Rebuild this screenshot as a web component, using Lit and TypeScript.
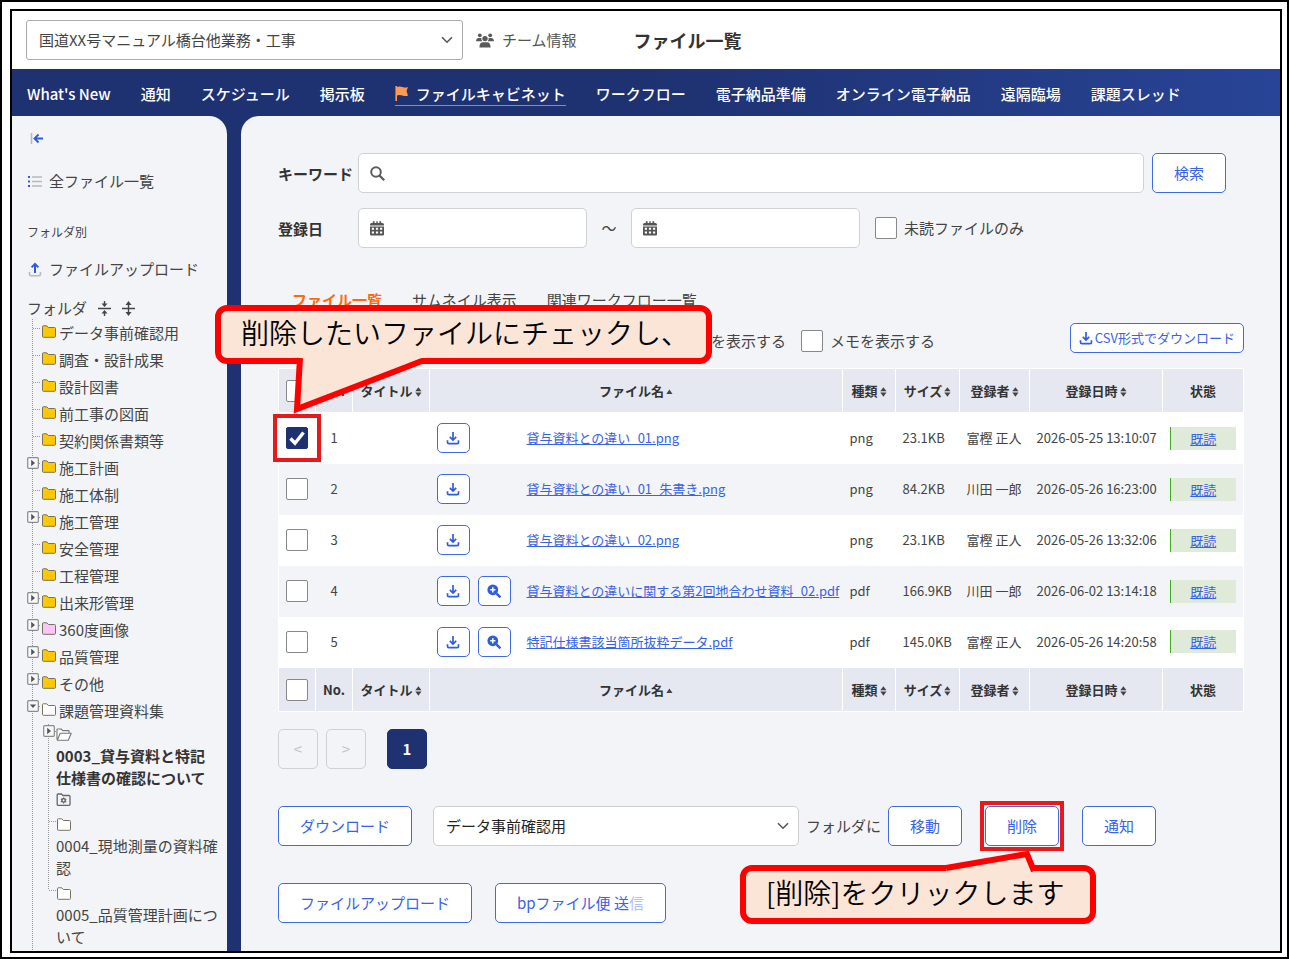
import { LitElement, html, svg, css, nothing } from "lit";
import { customElement, state } from "lit/decorators.js";
import { classMap } from "lit/directives/class-map.js";

interface FileRow {
  no: number;
  name: string;
  type: string;
  size: string;
  owner: string;
  date: string;
}

interface Folder {
  name: string;
  kind: "yellow" | "pink" | "white";
  expander?: "closed" | "open";
}

const NAV = [
  "What's New",
  "通知",
  "スケジュール",
  "掲示板",
  "ファイルキャビネット",
  "ワークフロー",
  "電子納品準備",
  "オンライン電子納品",
  "遠隔臨場",
  "課題スレッド",
];

const FOLDERS: Folder[] = [
  { name: "データ事前確認用", kind: "yellow" },
  { name: "調査・設計成果", kind: "yellow" },
  { name: "設計図書", kind: "yellow" },
  { name: "前工事の図面", kind: "yellow" },
  { name: "契約関係書類等", kind: "yellow" },
  { name: "施工計画", kind: "yellow", expander: "closed" },
  { name: "施工体制", kind: "yellow" },
  { name: "施工管理", kind: "yellow", expander: "closed" },
  { name: "安全管理", kind: "yellow" },
  { name: "工程管理", kind: "yellow" },
  { name: "出来形管理", kind: "yellow", expander: "closed" },
  { name: "360度画像", kind: "pink", expander: "closed" },
  { name: "品質管理", kind: "yellow", expander: "closed" },
  { name: "その他", kind: "yellow", expander: "closed" },
  { name: "課題管理資料集", kind: "white", expander: "open" },
];

const FILES: FileRow[] = [
  { no: 1, name: "貸与資料との違い_01.png", type: "png", size: "23.1KB", owner: "富樫 正人", date: "2026-05-25 13:10:07" },
  { no: 2, name: "貸与資料との違い_01_朱書き.png", type: "png", size: "84.2KB", owner: "川田 一郎", date: "2026-05-26 16:23:00" },
  { no: 3, name: "貸与資料との違い_02.png", type: "png", size: "23.1KB", owner: "富樫 正人", date: "2026-05-26 13:32:06" },
  { no: 4, name: "貸与資料との違いに関する第2回地合わせ資料_02.pdf", type: "pdf", size: "166.9KB", owner: "川田 一郎", date: "2026-06-02 13:14:18" },
  { no: 5, name: "特記仕様書該当箇所抜粋データ.pdf", type: "pdf", size: "145.0KB", owner: "富樫 正人", date: "2026-05-26 14:20:58" },
];

const FILL = { yellow: "#ffc800", pink: "#fcc4f8", white: "#fff" };

const icon = (w: number, h: number, body: unknown) =>
  html`<svg width=${w} height=${h} viewBox="0 0 ${w} ${h}" aria-hidden="true">${body}</svg>`;

const chevron = icon(12, 8, svg`<path d="M1 1.2l5 5 5-5" fill="none" stroke="#555" stroke-width="1.6"/>`);

const folder = (fill: string) =>
  icon(16, 13, svg`<path d="M1.5 1.5Q1.5.8 2.2.8h3.6l1.6 1.7h6.1q1 0 1 1v8q0 .8-1 .8h-11q-1 0-1-.8z" fill=${fill} stroke="#77725f" stroke-width="1"/>`);

const openFolder = icon(16, 13, svg`<path d="M1 11.5V1.6Q1 1 1.7 1h3.5l1.5 1.6h5.6q.8 0 .8.8V5M1.3 12.2L4.2 5.2h11l-2.9 7z" fill="#fff" stroke="#777" stroke-width="1.1" stroke-linejoin="round"/>`);

const gearFolder = icon(16, 13, svg`
  <path d="M1.2 11.5V1.8Q1.2 1 2 1h3.4l1.6 1.5h6q1 0 1 1v8q0 .8-1 .8H2q-.8 0-.8-.8z" fill="#f3f4f8" stroke="#666" stroke-width="1.3"/>
  <circle cx="7.6" cy="7.4" r="1.7" fill="none" stroke="#555" stroke-width="1.3"/>
  <path d="M7.6 4.4v1M7.6 9.4v1M4.9 5.9l.9.5M9.4 8.4l.9.5M4.9 8.9l.9-.5M9.4 6.4l.9-.5" stroke="#555" stroke-width="1.1"/>`);

const expander = (open: boolean) =>
  icon(12, 12, svg`<rect x=".7" y=".7" width="10.6" height="10.6" rx="1" fill="#f7f8fb" stroke="#8a8a8a" stroke-width="1.2"/>
    ${open ? svg`<path d="M2.8 4.4h6.4L6 8z" fill="#555"/>` : svg`<path d="M4.2 2.8v6.4L8 6z" fill="#555"/>`}`);

const download = icon(14, 14, svg`
  <path d="M7 1v7.6M3.8 5.8L7 9l3.2-3.2" fill="none" stroke="#2f5be0" stroke-width="1.7"/>
  <path d="M1.5 9.3v1.9q0 1.5 1.5 1.5h8q1.5 0 1.5-1.5V9.3" fill="none" stroke="#2f5be0" stroke-width="1.7"/>`);

const upload = icon(14, 15, svg`
  <path d="M7 11V2.2M3.6 5.4L7 2l3.4 3.4" fill="none" stroke="#2f5be0" stroke-width="2"/>
  <path d="M1.5 10v2.2q0 1.5 1.5 1.5h8q1.5 0 1.5-1.5V10" fill="none" stroke="#bbb" stroke-width="1.6"/>`);

const zoomIn = icon(14, 14, svg`
  <circle cx="5.8" cy="5.8" r="5.4" fill="#2f5be0"/>
  <path d="M9.4 9.4l4 4" stroke="#2f5be0" stroke-width="2.3"/>
  <path d="M5.8 3.2v5.2M3.2 5.8h5.2" stroke="#fff" stroke-width="1.5"/>`);

const search = icon(15, 15, svg`<circle cx="6" cy="6" r="4.8" fill="none" stroke="#5c5c5c" stroke-width="2"/><path d="M9.6 9.6l4.6 4.6" stroke="#5c5c5c" stroke-width="2.2"/>`);

const calendar = icon(14, 15, svg`
  <path d="M0 3.6Q0 2 1.6 2H2.8V.2h1.8V2h1.7V.2h1.4V2h1.7V.2h1.8V2h1.2Q14 2 14 3.6V4.6H0z" fill="#555"/>
  <path d="M0 5.4h14v7.8q0 1.4-1.4 1.4H1.4Q0 14.6 0 13.2z" fill="#555"/>
  <path d="M1.8 6.8h2.2v2H1.8zM5.9 6.8h2.2v2H5.9zM10 6.8h2.2v2H10zM1.8 10.6h2.2v2H1.8zM5.9 10.6h2.2v2H5.9zM10 10.6h2.2v2H10z" fill="#fff"/>`);

const people = icon(18, 15, svg`<g fill="#5a5a5a">
  <circle cx="3.8" cy="2.3" r="1.9"/><circle cx="14.2" cy="2.3" r="1.9"/><circle cx="9" cy="5.6" r="2.7"/>
  <path d="M0 8.2Q.2 4.9 3 4.9h1.5q.6 0 .9.2Q5 7.2 6.3 8.3H.4zM18 8.2Q17.8 4.9 15 4.9h-1.5q-.6 0-.9.2Q13 7.2 11.7 8.3h5.9zM3.4 14.6Q3.5 9.3 7 9.3h4q3.5 0 3.6 5.3z"/></g>`);

const flag = icon(14, 15, svg`<path d="M1.2 0v15" stroke="#ff9a52" stroke-width="1.6"/><path d="M1.5 1q3-1.200 6 0t5.500 0l-1.500 4 1.500 4.500q-2.500 1.200-5.500 0t-6 0z" fill="#ff9a52"/>`);

const listIcon = icon(16, 13, svg`
  <path d="M1 1h2v2H1zM1 5.500h2v2H1zM1 10h2v2H1z" fill="#2f5be0"/>
  <path d="M5 2h10M5 6.500h10M5 11h10" stroke="#b5b8c0" stroke-width="1.600"/>`);

const collapse = icon(14, 11, svg`<path d="M1.500 0v11" stroke="#b5b8c0" stroke-width="1.600"/><path d="M13 5.500H5M8.500 1.500l-4 4 4 4" fill="none" stroke="#2f5be0" stroke-width="1.900"/>`);

const foldAll = icon(13, 15, svg`<path d="M0 7.500h13M6.500 0v4M6.500 15v-4" stroke="#444" stroke-width="1.400"/><path d="M3.500 2.500h6l-3 3.500zM3.500 12.500h6l-3-3.500z" fill="#444"/>`);

const unfoldAll = icon(13, 15, svg`<path d="M0 7.500h13M6.500 3v10" stroke="#444" stroke-width="1.400"/><path d="M3.500 4h6l-3-4zM3.500 11h6l-3 4z" fill="#444"/>`);

const sortBoth = icon(7, 10, svg`<path d="M.3 4.200h6.200L3.400.2zM.3 5.600h6.200L3.400 9.800z" fill="#444"/>`);
const sortUp = icon(7, 6, svg`<path d="M.3 5h6.200L3.400 .6z" fill="#444"/>`);

@customElement("app-root")
export class AppRoot extends LitElement {
  @state() private selected = new Set<number>([1]);

  static styles = css`
    :host {
      display: block;
      font-family: "Noto Sans CJK JP", "Noto Sans", sans-serif;
      font-size: 15px;
      line-height: 22px;
      color: #444;
    }
    * { box-sizing: border-box; }
    svg { display: block; flex: none; }
    ul { list-style: none; margin: 0; padding: 0; }
    h1, p { margin: 0; }
    button, input, select { font: inherit; color: inherit; margin: 0; }
    a { color: inherit; text-decoration: none; }

    .sheet {
      display: flex;
      min-height: 100vh;
      border: 2px solid #000;
      padding: 7px 5px 4px 8px;
      background: #fff;
    }
    .window {
      flex: 1;
      min-width: 0;
      display: flex;
      flex-direction: column;
      border: 2px solid #000;
    }
    .top {
      display: flex;
      align-items: center;
      height: 58px;
      padding: 0 14px;
    }
    .pick { display: grid; align-items: center; }
    .pick select {
      grid-area: 1 / 1;
      appearance: none;
      height: 40px;
      width: 100%;
      border: 1px solid #cfcfcf;
      border-radius: 5px;
      background: #fff;
      padding: 0 32px 0 12px;
      color: #222;
    }
    .pick svg { grid-area: 1 / 1; justify-self: end; margin-right: 10px; pointer-events: none; }
    .project { width: 437px; }
    .project select { border-color: #aaa; border-radius: 3px; color: #444; }
    .team { display: flex; align-items: center; gap: 8px; margin-left: 13px; color: #555; }
    h1 { margin-left: 57px; font-size: 18px; font-weight: 700; color: #333; }

    .nav {
      height: 47px;
      padding: 0 15px;
      background: linear-gradient(90deg, #1e3170 50%, #284496);
    }
    .nav ul { display: flex; align-items: center; gap: 30px; height: 100%; padding-top: 3px; }
    .nav a { display: flex; align-items: center; gap: 7px; color: #fff; font-weight: 500; white-space: nowrap; border-bottom: 1px solid transparent; }
    .nav a.current { border-color: #6f8ee8; }

    .body { flex: 1; display: flex; gap: 14px; background: #1e3272; }
    .side {
      width: 215px;
      flex: none;
      display: flex;
      flex-direction: column;
      padding: 12px 4px 0 15px;
      background: #f3f4f8;
      border-radius: 0 18px 0 0;
    }
    .tool { display: flex; align-items: center; justify-content: center; width: 20px; height: 20px; border: 0; padding: 0; background: none; }
    .link { display: flex; align-items: center; gap: 7px; height: 24px; }
    .all { margin-top: 21px; gap: 6px; }
    .caption { margin-top: 29px; height: 20px; font-size: 12px; line-height: 20px; }
    .upload { margin-top: 15px; padding-left: 1px; }
    .head { display: flex; align-items: center; margin-top: 16px; height: 22px; }
    .head .tool { width: 13px; margin-left: 11px; }

    .tree { flex: 1; background: repeating-linear-gradient(#999 0 1px, transparent 1px 2px) 5px 0 / 1px 100% no-repeat; }
    .node {
      display: grid;
      grid-template-columns: 13px 16px 1fr;
      column-gap: 1px;
      align-items: center;
      height: 27px;
      background: repeating-linear-gradient(90deg, #999 0 1px, transparent 1px 2px) 6px 9px / 8px 1px no-repeat;
    }
    .node > svg { margin-bottom: 2px; }
    .node .toggle { padding-bottom: 10px; }
    .node .name { padding-left: 1px; }
    .toggle { display: block; border: 0; padding: 0; background: none; }
    .sub { margin-left: 16px; background: repeating-linear-gradient(#999 0 1px, transparent 1px 2px) 5px 0 / 1px 166px no-repeat; }
    .sub li {
      padding-left: 13px;
      margin-bottom: 4px;
      background: repeating-linear-gradient(90deg, #999 0 1px, transparent 1px 2px) 6px 7px / 8px 1px no-repeat;
    }
    .sub li:last-child { margin-bottom: 0; }
    .sub li.on { padding-right: 12px; font-weight: 700; color: #333; }
    .line { display: flex; align-items: center; height: 21px; }
    .on .line .toggle { margin: 0 1px 8px -13px; }

    .main {
      flex: 1;
      min-width: 0;
      padding: 37px 36px 28px 37px;
      background: #f3f4f8;
      border-radius: 18px 0 0 0;
    }
    .row { display: flex; align-items: center; }
    .form { display: grid; gap: 15px; padding-right: 18px; }
    .form .lab { width: 80px; font-weight: 700; color: #333; padding-top: 2px; }
    .field {
      display: flex;
      align-items: center;
      gap: 8px;
      height: 40px;
      padding: 0 11px;
      border: 1px solid #d0d1d4;
      border-radius: 5px;
      background: #fff;
    }
    .field input { flex: 1; min-width: 0; border: 0; padding: 0; background: none; outline: 0; }
    .grow { flex: 1; }
    .date { width: 229px; }
    .wave { width: 44px; text-align: center; }
    .btn {
      display: flex;
      align-items: center;
      justify-content: center;
      height: 40px;
      padding: 0 21px;
      border: 1px solid #3f6ae6;
      border-radius: 5px;
      background: #fff;
      color: #3763e4;
      white-space: nowrap;
    }
    .form .btn { margin-left: 8px; }
    .check {
      appearance: none;
      display: block;
      flex: none;
      width: 22px;
      height: 22px;
      border: 1px solid #888;
      border-radius: 2px;
      background: #fff;
    }
    .check:checked {
      border-color: #1e3272;
      background: #1e3272 url("data:image/svg+xml,%3Csvg xmlns='http://www.w3.org/2000/svg' viewBox='0 0 20 20'%3E%3Cpath d='M3.500 10.500l4.500 4.700L16.500 4.500' fill='none' stroke='white' stroke-width='3.400'/%3E%3C/svg%3E") center / 20px 20px no-repeat;
    }
    .opt { display: flex; align-items: center; gap: 7px; }
    .date + .opt { margin-left: 15px; }

    .tabs { display: flex; gap: 30px; margin-top: 40px; padding-left: 14px; height: 24px; }
    .tabs a { line-height: 24px; }
    .tabs .current { color: #ff6a0d; font-weight: 700; }
    .options { display: flex; align-items: center; gap: 15px; height: 30px; margin-top: 11px; padding-left: 374px; white-space: nowrap; }
    .options .opt { padding-top: 5px; }
    .csv { height: 30px; margin-left: auto; padding: 0 8px; gap: 2px; font-size: 13px; }

    table { width: 100%; margin-top: 15px; border-collapse: collapse; table-layout: fixed; font-size: 13px; line-height: 20px; border: 1px solid #fff; }
    .c1, .c2 { width: 37px; }
    .c3 { width: 77px; }
    .c5 { width: 53px; }
    .c6 { width: 64px; }
    .c7 { width: 70px; }
    .c8 { width: 133px; }
    .c9 { width: 81px; }
    th { height: 44px; padding: 0; background: #e5e8f1; border: 1px solid #fff; color: #333; font-weight: 700; white-space: nowrap; }
    th .row { justify-content: center; gap: 2px; }
    th svg { margin-top: 3px; }
    td { height: 51px; padding: 0 7px; white-space: nowrap; }
    td.no { text-align: center; padding: 0; }
    td.names { padding-right: 0; }
    tbody tr { background: #fff; }
    tbody tr:nth-child(even) { background: #f3f4f8; }
    .file { display: grid; grid-template-columns: 33px 33px 1fr; column-gap: 8px; align-items: center; }
    .mini { height: 30px; padding: 0; }
    .file a { grid-column: 3; padding-left: 8px; color: #3763e4; text-decoration: underline; }
    .badge { display: block; height: 23px; line-height: 23px; border-left: 1px solid #3fae1f; background: #dfead8; text-align: center; color: #3763e4; text-decoration: underline; }

    .pages { display: flex; margin-top: 17px; }
    .page { width: 40px; height: 40px; margin-right: 8px; padding: 0; border: 1px solid #cfd0d3; border-radius: 5px; background: none; color: #c4c5c8; }
    .page.current { margin-left: 13px; border-color: #1e3272; background: #1e3272; color: #fff; font-weight: 700; }
    .actions { margin-top: 37px; }
    .target { width: 366px; margin-left: 21px; }
    .unit { margin: 0 7px; white-space: nowrap; }
    .gap { margin-left: 23px; }

    .spot { position: relative; }
    .mark { outline: 4px solid #e8191c; outline-offset: 1px; }
    .mark.wide { outline-offset: 9px; width: 22px; }
    .note {
      position: absolute;
      z-index: 2;
      border: 6px solid #f00;
      border-radius: 12px;
      background: #fbe5d6;
      color: #000;
      font-size: 28px;
      font-weight: 350;
      line-height: 42px;
      padding: 0 20px 5px;
      white-space: nowrap;
    }
    .note svg { position: absolute; overflow: visible; }
    .note.first { left: -71px; top: -122px; width: 497px; }
    .note.first svg { left: 74px; top: 47px; }
    .note.second { left: -245px; top: 59px; width: 356px; }
    .note.second svg { left: 200px; top: -21px; }
    .faint { opacity: 0.4; }
  `;

  private toggle(no: number) {
    const next = new Set(this.selected);
    next.has(no) ? next.delete(no) : next.add(no);
    this.selected = next;
  }

  private heading(place: string) {
    return html`<tr>
      <th><div class="row"><input class="check" type="checkbox" aria-label="${place}" /></div></th>
      <th>No.</th>
      <th><div class="row">タイトル${sortBoth}</div></th>
      <th><div class="row">ファイル名${sortUp}</div></th>
      <th><div class="row">種類${sortBoth}</div></th>
      <th><div class="row">サイズ${sortBoth}</div></th>
      <th><div class="row">登録者${sortBoth}</div></th>
      <th><div class="row">登録日時${sortBoth}</div></th>
      <th>状態</th>
    </tr>`;
  }

  private fileRow(f: FileRow) {
    const first = f.no === 1;
    return html`<tr>
      <td>
        <div class=${classMap({ spot: first, mark: first, wide: first })}>
          <input class="check" type="checkbox" aria-label=${f.name} .checked=${this.selected.has(f.no)} @change=${() => this.toggle(f.no)} />
          ${first
            ? html`<div class="note first">
                削除したいファイルにチェックし、
                <svg width="130" height="58" viewBox="0 0 130 58" aria-hidden="true">
                  <path d="M5 0L2 51 127 0z" fill="#fbe5d6" />
                  <path d="M5 0L2 51 127 3" fill="none" stroke="#f00" stroke-width="6" />
                </svg>
              </div>`
            : nothing}
        </div>
      </td>
      <td class="no">${f.no}</td>
      <td></td>
      <td class="names">
        <div class="file">
          <button class="btn mini" aria-label="ダウンロード">${download}</button>
          ${f.type === "pdf" ? html`<button class="btn mini" aria-label="プレビュー">${zoomIn}</button>` : nothing}
          <a href="#">${f.name}</a>
        </div>
      </td>
      <td>${f.type}</td>
      <td>${f.size}</td>
      <td>${f.owner}</td>
      <td>${f.date}</td>
      <td><a class="badge" href="#">既読</a></td>
    </tr>`;
  }

  render() {
    return html`<div class="sheet"><div class="window">
      <header class="top">
        <div class="pick project">
          <select aria-label="プロジェクト"><option>国道XX号マニュアル橋台他業務・工事</option></select>
          ${chevron}
        </div>
        <a class="team" href="#">${people}チーム情報</a>
        <h1>ファイル一覧</h1>
      </header>
      <nav class="nav"><ul>
        ${NAV.map((n, i) => html`<li><a href="#" class=${classMap({ current: i === 4 })}>${i === 4 ? flag : nothing}${n}</a></li>`)}
      </ul></nav>
      <div class="body">
        <aside class="side">
          <button class="tool" aria-label="閉じる">${collapse}</button>
          <a class="link all" href="#">${listIcon}全ファイル一覧</a>
          <p class="caption">フォルダ別</p>
          <a class="link upload" href="#">${upload}ファイルアップロード</a>
          <div class="head">フォルダ
            <button class="tool" aria-label="すべて閉じる">${foldAll}</button>
            <button class="tool" aria-label="すべて開く">${unfoldAll}</button>
          </div>
          <div class="tree">
            <ul>
              ${FOLDERS.map((f) => html`<li class="node">
                ${f.expander ? html`<button class="toggle" aria-label="開閉">${expander(f.expander === "open")}</button>` : html`<span></span>`}
                ${folder(FILL[f.kind])}
                <a class="name" href="#">${f.name}</a>
              </li>`)}
            </ul>
            <ul class="sub">
              <li class="on">
                <div class="line"><button class="toggle" aria-label="開閉">${expander(false)}</button>${openFolder}</div>
                <a href="#">0003_貸与資料と特記仕様書の確認について</a>
                <div class="line">${gearFolder}</div>
              </li>
              <li><div class="line">${folder(FILL.white)}</div><a href="#">0004_現地測量の資料確認</a></li>
              <li><div class="line">${folder(FILL.white)}</div><a href="#">0005_品質管理計画について</a></li>
            </ul>
          </div>
        </aside>
        <main class="main">
          <form class="form">
            <div class="row">
              <label class="lab" for="kw">キーワード</label>
              <div class="field grow">${search}<input id="kw" type="text" /></div>
              <button class="btn" type="button">検索</button>
            </div>
            <div class="row">
              <label class="lab" for="from">登録日</label>
              <div class="field date">${calendar}<input id="from" type="text" /></div>
              <span class="wave">～</span>
              <div class="field date">${calendar}<input aria-label="登録日" type="text" /></div>
              <label class="opt"><input class="check" type="checkbox" />未読ファイルのみ</label>
            </div>
          </form>
          <nav class="tabs">
            <a class="current" href="#">ファイル一覧</a>
            <a href="#">サムネイル表示</a>
            <a href="#">関連ワークフロー一覧</a>
          </nav>
          <div class="options">
            <label class="opt"><input class="check" type="checkbox" />タグを表示する</label>
            <label class="opt"><input class="check" type="checkbox" />メモを表示する</label>
            <button class="btn csv">${download}CSV形式でダウンロード</button>
          </div>
          <table>
            <colgroup>${[1, 2, 3, 4, 5, 6, 7, 8, 9].map((n) => html`<col class="c${n}" />`)}</colgroup>
            <thead>${this.heading("すべて選択")}</thead>
            <tbody>${FILES.map((f) => this.fileRow(f))}</tbody>
            <tfoot>${this.heading("すべて選択")}</tfoot>
          </table>
          <div class="pages">
            <button class="page" disabled>&lt;</button>
            <button class="page" disabled>&gt;</button>
            <button class="page current">1</button>
          </div>
          <div class="row actions">
            <button class="btn">ダウンロード</button>
            <div class="pick target">
              <select id="dest"><option>データ事前確認用</option></select>
              ${chevron}
            </div>
            <label class="unit" for="dest">フォルダに</label>
            <button class="btn">移動</button>
            <div class="spot mark gap">
              <button class="btn">削除</button>
              <div class="note second">
                [削除]をクリックします
                <svg width="95" height="24" viewBox="0 0 95 24" aria-hidden="true">
                  <path d="M0 18L81 4 88 23 85 21H0z" fill="#fbe5d6" />
                  <path d="M0 18L81 4 88 21" fill="none" stroke="#f00" stroke-width="6" />
                </svg>
              </div>
            </div>
            <button class="btn gap">通知</button>
          </div>
          <div class="row actions">
            <button class="btn">ファイルアップロード</button>
            <button class="btn gap"><span>bpファイル便 送<span class="faint">信</span></span></button>
          </div>
        </main>
      </div>
    </div></div>`;
  }
}
